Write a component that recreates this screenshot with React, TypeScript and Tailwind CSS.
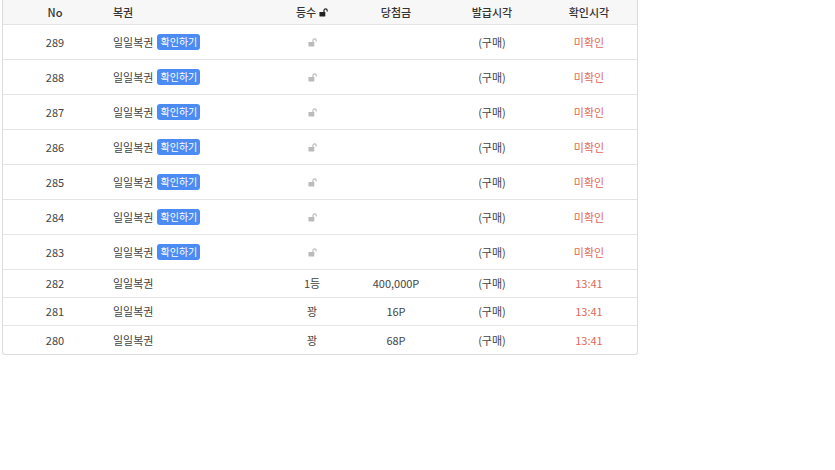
import React from "react";

const Lock = ({ c = "#bbb" }: { c?: string }) => (
  <svg width="9" height="9" viewBox="0 0 10 10" className="inline-block">
    <rect x="0.5" y="4.5" width="6.5" height="5" rx="0.5" fill={c} />
    <path d="M5.5 4.5V2.8a1.8 1.8 0 0 1 3.6 0v1" fill="none" stroke={c} strokeWidth="1.3" />
  </svg>
);

const cols = "grid grid-cols-[104px_164px_82px_86px_106px_88px] items-center";

export default function App() {
  const top = [289, 288, 287, 286, 285, 284, 283];
  const bottom = [
    [282, "1등", "400,000P"],
    [281, "꽝", "16P"],
    [280, "꽝", "68P"],
  ];
  return (
    <div className="bg-white w-[835px] h-[470px] pl-[2px] text-[11px] text-[#444]" style={{ fontFamily: "'Noto Sans CJK KR', 'Noto Sans', sans-serif" }}>
      <div className="w-[636px] border border-t-0 border-[#dcdcdc] rounded-b-[3px] overflow-hidden">
        <div className={`${cols} h-[25px] bg-[#f7f7f7] border-b border-[#e4e4e4] font-medium text-[#333]`}>
          <div className="text-center">No</div>
          <div className="pl-[6px]">복권</div>
          <div className="text-center flex items-center justify-center gap-[3px]">등수 <Lock c="#222" /></div>
          <div className="text-center">당첨금</div>
          <div className="text-center">발급시각</div>
          <div className="text-center">확인시각</div>
        </div>
        {top.map((n) => (
          <div key={n} className={`${cols} h-[35px] border-b border-[#e4e4e4]`}>
            <div className="text-center">{n}</div>
            <div className="pl-[6px] flex items-center gap-[4px]">
              일일복권
              <span className="bg-[#4b8bf4] text-white rounded-[3px] px-[3px] h-[16px] leading-[16px] text-[10px]">확인하기</span>
            </div>
            <div className="flex justify-center"><Lock /></div>
            <div />
            <div className="text-center">(구매)</div>
            <div className="text-center text-[#e06a58]">미확인</div>
          </div>
        ))}
        {bottom.map(([n, r, p], i) => (
          <div key={n as number} className={`${cols} h-[28px] ${i < 2 ? "border-b border-[#e4e4e4]" : ""}`}>
            <div className="text-center">{n}</div>
            <div className="pl-[6px]">일일복권</div>
            <div className="text-center">{r}</div>
            <div className="text-center">{p}</div>
            <div className="text-center">(구매)</div>
            <div className="text-center text-[#e06a58]">13:41</div>
          </div>
        ))}
      </div>
    </div>
  );
}
